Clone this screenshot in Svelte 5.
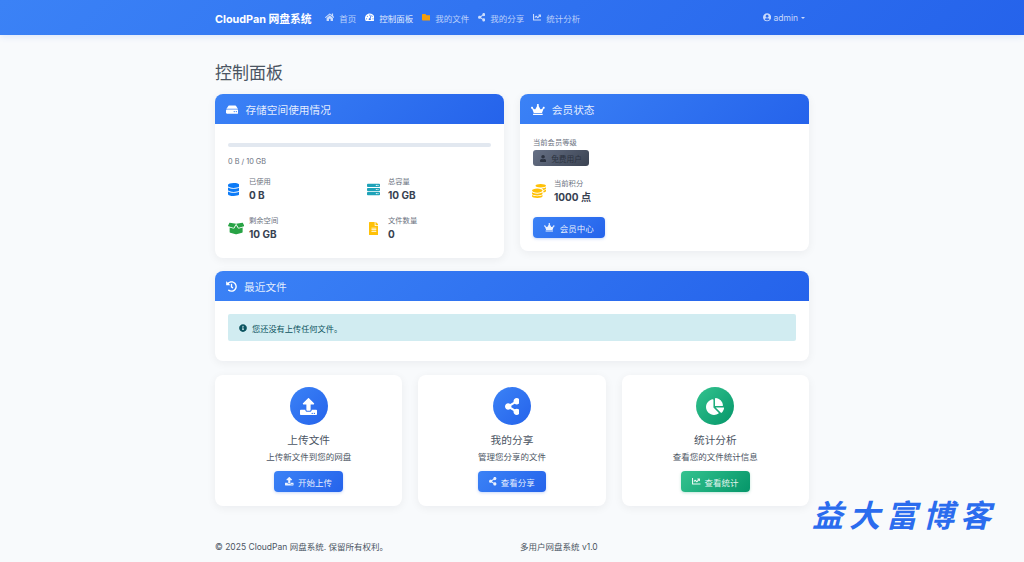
<script>
	const icons = {
		home: [576, 'M280.37 148.26L96 300.11V464a16 16 0 0 0 16 16l112.06-.29a16 16 0 0 0 15.92-16V368a16 16 0 0 1 16-16h64a16 16 0 0 1 16 16v95.64a16 16 0 0 0 16 16.05L464 480a16 16 0 0 0 16-16V300L295.67 148.26a12.19 12.19 0 0 0-15.3 0zM571.6 251.47L488 182.56V44.05a12 12 0 0 0-12-12h-56a12 12 0 0 0-12 12v72.61L318.47 43a48 48 0 0 0-61 0L4.34 251.47a12 12 0 0 0-1.6 16.9l25.5 31A12 12 0 0 0 45.15 301l235.22-193.74a12.19 12.19 0 0 1 15.3 0L530.9 301a12 12 0 0 0 16.9-1.6l25.5-31a12 12 0 0 0-1.7-16.93z'],
		gauge: [576, 'M288 32C128.94 32 0 160.94 0 320c0 52.8 14.25 102.26 39.06 144.8 5.61 9.62 16.3 15.2 27.44 15.2h443c11.14 0 21.83-5.58 27.44-15.2C561.75 422.26 576 372.8 576 320c0-159.06-128.94-288-288-288zm0 64c14.71 0 26.58 10.13 30.32 23.65-1.11 2.26-2.64 4.23-3.45 6.67l-9.22 27.67c-5.13 3.49-10.97 6.01-17.64 6.01-17.67 0-32-14.33-32-32S270.33 96 288 96zM96 384c-17.67 0-32-14.33-32-32s14.33-32 32-32 32 14.33 32 32-14.33 32-32 32zm48-160c-17.67 0-32-14.33-32-32s14.33-32 32-32 32 14.33 32 32-14.33 32-32 32zm246.77-72.41l-61.33 184C343.13 347.33 352 364.54 352 384c0 11.72-3.38 22.55-8.88 32H232.88c-5.5-9.45-8.88-20.28-8.88-32 0-33.94 26.5-61.43 59.9-63.59l61.34-184.01c4.17-12.56 17.73-19.45 30.36-15.17 12.57 4.19 19.35 17.79 15.17 30.36zm14.66 57.2l15.52-46.55c3.47-1.29 7.13-2.23 11.05-2.23 17.67 0 32 14.33 32 32s-14.33 32-32 32c-11.38-.01-20.89-6.28-26.57-15.22zM480 384c-17.67 0-32-14.33-32-32s14.33-32 32-32 32 14.33 32 32-14.33 32-32 32z'],
		folder: [512, 'M464 128H272l-64-64H48C21.49 64 0 85.49 0 112v288c0 26.51 21.49 48 48 48h416c26.51 0 48-21.49 48-48V176c0-26.51-21.49-48-48-48z'],
		share: [448, 'M352 320c-22.608 0-43.387 7.819-59.79 20.895l-102.486-64.054a96.551 96.551 0 0 0 0-41.683l102.486-64.054C308.613 184.181 329.392 192 352 192c53.019 0 96-42.981 96-96S405.019 0 352 0s-96 42.981-96 96c0 7.158.79 14.13 2.276 20.841L155.79 180.895C139.387 167.819 118.608 160 96 160c-53.019 0-96 42.981-96 96s42.981 96 96 96c22.608 0 43.387-7.819 59.79-20.895l102.486 64.054A96.301 96.301 0 0 0 256 416c0 53.019 42.981 96 96 96s96-42.981 96-96-42.981-96-96-96z'],
		chart: [512, 'M496 384H64V80c0-8.84-7.16-16-16-16H16C7.16 64 0 71.16 0 80v336c0 17.67 14.33 32 32 32h464c8.84 0 16-7.16 16-16v-32c0-8.84-7.16-16-16-16zM464 96H345.94c-21.38 0-32.09 25.85-16.97 40.97l32.4 32.4L288 242.75l-73.37-73.37c-12.5-12.5-32.76-12.5-45.25 0l-68.69 68.69c-6.25 6.25-6.25 16.38 0 22.63l22.62 22.62c6.25 6.25 16.38 6.25 22.63 0L192 237.25l73.37 73.37c12.5 12.5 32.76 12.5 45.25 0l96-96 32.4 32.4c15.12 15.12 40.97 4.41 40.97-16.97V112c0-8.84-7.16-16-16-16z'],
		userCircle: [496, 'M248 8C111 8 0 119 0 256s111 248 248 248 248-111 248-248S385 8 248 8zm0 96c48.6 0 88 39.4 88 88s-39.4 88-88 88-88-39.4-88-88 39.4-88 88-88zm0 344c-58.7 0-111.3-26.6-146.5-68.2 18.8-35.4 55.6-59.8 98.5-59.8 2.4 0 4.8.4 7.1 1.1 13 4.2 26.6 6.9 40.9 6.9 14.3 0 28-2.7 40.9-6.9 2.3-.7 4.7-1.1 7.1-1.1 42.9 0 79.7 24.4 98.5 59.8C359.3 421.4 306.7 448 248 448z'],
		hdd: [576, 'M576 304v96c0 26.51-21.49 48-48 48H48c-26.51 0-48-21.49-48-48v-96c0-26.51 21.49-48 48-48h480c26.51 0 48 21.49 48 48zm-48-80a79.557 79.557 0 0 1 30.777 6.165L462.25 85.374A48.003 48.003 0 0 0 422.311 64H153.689a48 48 0 0 0-39.938 21.374L17.223 230.165A79.557 79.557 0 0 1 48 224h480zm-48 96c-17.673 0-32 14.327-32 32s14.327 32 32 32 32-14.327 32-32-14.327-32-32-32zm-96 0c-17.673 0-32 14.327-32 32s14.327 32 32 32 32-14.327 32-32-14.327-32-32-32z'],
		crown: [640, 'M528 448H112c-8.8 0-16 7.2-16 16v32c0 8.8 7.2 16 16 16h416c8.8 0 16-7.2 16-16v-32c0-8.8-7.2-16-16-16zm64-320c-26.5 0-48 21.5-48 48 0 7.1 1.6 13.7 4.4 19.8L476 239.2c-15.4 9.2-35.3 4-44.2-11.6L350.3 85C361 76.2 368 63 368 48c0-26.5-21.5-48-48-48s-48 21.5-48 48c0 15 7 28.2 17.7 37l-81.5 142.6c-8.9 15.6-28.9 20.8-44.2 11.6l-72.3-43.4c2.7-6 4.4-12.7 4.4-19.8 0-26.5-21.5-48-48-48S0 149.5 0 176s21.5 48 48 48c2.6 0 5.2-.4 7.7-.8L128 416h384l72.3-192.8c2.5.4 5.1.8 7.7.8 26.5 0 48-21.5 48-48s-21.5-48-48-48z'],
		database: [448, 'M448 73.143v45.714C448 159.143 347.667 192 224 192S0 159.143 0 118.857V73.143C0 32.857 100.333 0 224 0s224 32.857 224 73.143zM448 176v102.857C448 319.143 347.667 352 224 352S0 319.143 0 278.857V176c48.125 33.143 136.208 48.572 224 48.572S399.874 209.143 448 176zm0 160v102.857C448 479.143 347.667 512 224 512S0 479.143 0 438.857V336c48.125 33.143 136.208 48.572 224 48.572S399.874 369.143 448 336z'],
		server: [512, 'M480 160H32c-17.673 0-32-14.327-32-32V64c0-17.673 14.327-32 32-32h448c17.673 0 32 14.327 32 32v64c0 17.673-14.327 32-32 32zm-48-88c-13.255 0-24 10.745-24 24s10.745 24 24 24 24-10.745 24-24-10.745-24-24-24zm-64 0c-13.255 0-24 10.745-24 24s10.745 24 24 24 24-10.745 24-24-10.745-24-24-24zm112 248H32c-17.673 0-32-14.327-32-32v-64c0-17.673 14.327-32 32-32h448c17.673 0 32 14.327 32 32v64c0 17.673-14.327 32-32 32zm-48-88c-13.255 0-24 10.745-24 24s10.745 24 24 24 24-10.745 24-24-10.745-24-24-24zm-64 0c-13.255 0-24 10.745-24 24s10.745 24 24 24 24-10.745 24-24-10.745-24-24-24zm112 248H32c-17.673 0-32-14.327-32-32v-64c0-17.673 14.327-32 32-32h448c17.673 0 32 14.327 32 32v64c0 17.673-14.327 32-32 32zm-48-88c-13.255 0-24 10.745-24 24s10.745 24 24 24 24-10.745 24-24-10.745-24-24-24zm-64 0c-13.255 0-24 10.745-24 24s10.745 24 24 24 24-10.745 24-24-10.745-24-24-24z'],
		box: [640, 'M425.7 256c-16.9 0-32.8-9-41.4-23.4L320 126l-64.2 106.6c-8.7 14.5-24.6 23.5-41.5 23.5-4.5 0-9-.6-13.3-1.9L64 215v178c0 14.7 10 27.5 24.2 31l216.2 54.1c10.2 2.5 20.9 2.5 31 0L551.8 424c14.2-3.6 24.2-16.4 24.2-31V215l-137 39.1c-4.3 1.3-8.8 1.9-13.3 1.9zm212.6-112.2L586.8 41c-3.1-6.2-9.8-9.8-16.7-8.9L320 64l91.7 152.1c3.8 6.3 11.4 9.3 18.5 7.3l197.9-56.5c9.9-2.9 14.7-13.9 10.2-23.1zM53.2 41L1.7 143.8c-4.6 9.2.3 20.2 10.1 23l197.9 56.5c7.1 2 14.7-1 18.5-7.3L320 64 69.8 32.1c-6.9-.8-13.5 2.8-16.6 8.9z'],
		file: [384, 'M224 136V0H24C10.7 0 0 10.7 0 24v464c0 13.3 10.7 24 24 24h336c13.3 0 24-10.7 24-24V160H248c-13.2 0-24-10.8-24-24zm64 236c0 6.6-5.4 12-12 12H108c-6.6 0-12-5.4-12-12v-8c0-6.6 5.4-12 12-12h168c6.6 0 12 5.4 12 12v8zm0-64c0 6.6-5.4 12-12 12H108c-6.6 0-12-5.4-12-12v-8c0-6.6 5.4-12 12-12h168c6.6 0 12 5.4 12 12v8zm0-72v8c0 6.6-5.4 12-12 12H108c-6.6 0-12-5.4-12-12v-8c0-6.6 5.4-12 12-12h168c6.6 0 12 5.4 12 12zm96-114.1v6.1H256V0h6.1c6.4 0 12.5 2.5 17 7l97.9 98c4.5 4.5 7 10.6 7 16.9z'],
		user: [448, 'M224 256c70.7 0 128-57.3 128-128S294.7 0 224 0 96 57.3 96 128s57.3 128 128 128zm89.6 32h-16.7c-22.2 10.2-46.9 16-72.9 16s-50.6-5.8-72.9-16h-16.7C60.2 288 0 348.2 0 422.4V464c0 26.5 21.5 48 48 48h352c26.5 0 48-21.5 48-48v-41.6c0-74.2-60.2-134.4-134.4-134.4z'],
		coins: [512, 'M0 405.3V448c0 35.3 86 64 192 64s192-28.7 192-64v-42.7C342.7 434.4 267.2 448 192 448S41.3 434.4 0 405.3zM320 128c106 0 192-28.7 192-64S426 0 320 0 128 28.7 128 64s86 64 192 64zM0 300.4V352c0 35.3 86 64 192 64s192-28.7 192-64v-51.6c-41.3 34-116.9 51.6-192 51.6S41.3 334.4 0 300.4zm416 11c57.3-11.1 96-31.7 96-55.4v-42.7c-23.2 16.4-57.3 27.6-96 34.5v63.6zM192 160C86 160 0 195.8 0 240s86 80 192 80 192-35.8 192-80-86-80-192-80zm219.3 56.3c60-10.8 100.7-32 100.7-56.3v-42.7c-35.5 25.1-96.5 38.6-160.7 41.8 29.5 14.3 51.2 33.5 60 57.2z'],
		history: [512, 'M504 255.531c.253 136.64-111.18 248.372-247.82 248.468-59.015.042-113.223-20.53-155.822-54.911-11.077-8.94-11.905-25.541-1.839-35.607l11.267-11.267c8.609-8.609 22.353-9.551 31.891-1.984C173.062 425.135 212.781 440 256 440c101.705 0 184-82.311 184-184 0-101.705-82.311-184-184-184-48.814 0-93.149 18.969-126.068 49.932l50.754 50.754c10.08 10.08 2.941 27.314-11.313 27.314H24c-8.837 0-16-7.163-16-16V38.627c0-14.254 17.234-21.393 27.314-11.314l49.372 49.372C129.209 34.136 189.552 8 256 8c136.81 0 247.747 110.78 248 247.531zm-180.912 78.784l9.823-12.63c8.138-10.463 6.253-25.542-4.21-33.679L288 256.349V152c0-13.255-10.745-24-24-24h-16c-13.255 0-24 10.745-24 24v135.651l65.409 50.874c10.463 8.137 25.541 6.253 33.679-4.21z'],
		info: [512, 'M256 8C119.043 8 8 119.083 8 256c0 136.997 111.043 248 248 248s248-111.003 248-248C504 119.083 392.957 8 256 8zm0 110c23.196 0 42 18.804 42 42s-18.804 42-42 42-42-18.804-42-42 18.804-42 42-42zm56 254c0 6.627-5.373 12-12 12h-88c-6.627 0-12-5.373-12-12v-24c0-6.627 5.373-12 12-12h12v-64h-12c-6.627 0-12-5.373-12-12v-24c0-6.627 5.373-12 12-12h64c6.627 0 12 5.373 12 12v100h12c6.627 0 12 5.373 12 12v24z'],
		upload: [512, 'M296 384h-80c-13.3 0-24-10.7-24-24V192h-87.7c-17.8 0-26.7-21.5-14.1-34.1L242.3 5.7c7.5-7.5 19.8-7.5 27.3 0l152.2 152.2c12.6 12.6 3.7 34.1-14.1 34.1H320v168c0 13.3-10.7 24-24 24zm216-8v112c0 13.3-10.7 24-24 24H24c-13.3 0-24-10.7-24-24V376c0-13.3 10.7-24 24-24h136v8c0 30.9 25.1 56 56 56h80c30.9 0 56-25.1 56-56v-8h136c13.3 0 24 10.7 24 24zm-124 88c0-11-9-20-20-20s-20 9-20 20 9 20 20 20 20-9 20-20zm64 0c0-11-9-20-20-20s-20 9-20 20 9 20 20 20 20-9 20-20z'],
		pie: [544, 'M527.79 288H290.5l158.03 158.03c6.04 6.04 15.98 6.53 22.19.68 38.7-36.46 65.32-85.61 73.13-140.86 1.34-9.46-6.51-17.85-16.06-17.85zm-15.83-64.8C503.72 103.74 408.26 8.28 288.8.04 279.68-.59 272 7.1 272 16.24V240h223.77c9.14 0 16.82-7.68 16.19-16.8zM224 288V50.71c0-9.55-8.39-17.4-17.84-16.06C86.99 51.49-4.1 155.6.14 280.37 4.5 408.51 114.83 513.59 243.03 511.98c50.4-.63 96.97-16.87 135.26-44.03 7.9-5.6 8.42-17.23 1.57-24.08L224 288z']
	};

	const navLinks = [
		{ icon: 'home', label: '首页' },
		{ icon: 'gauge', label: '控制面板', active: true },
		{ icon: 'folder', label: '我的文件', orange: true },
		{ icon: 'share', label: '我的分享' },
		{ icon: 'chart', label: '统计分析' }
	];

	const stats = [
		{ icon: 'database', color: '#0d7bf7', label: '已使用', value: '0 B' },
		{ icon: 'server', color: '#1ea2b8', label: '总容量', value: '10 GB' },
		{ icon: 'box', color: '#28a345', label: '剩余空间', value: '10 GB' },
		{ icon: 'file', color: '#ffc107', label: '文件数量', value: '0' }
	];

	const tools = [
		{ icon: 'upload', title: '上传文件', desc: '上传新文件到您的网盘', btn: '开始上传', btnIcon: 'upload' },
		{ icon: 'share', title: '我的分享', desc: '管理您分享的文件', btn: '查看分享', btnIcon: 'share' },
		{ icon: 'pie', title: '统计分析', desc: '查看您的文件统计信息', btn: '查看统计', btnIcon: 'chart', green: true }
	];
</script>

{#snippet icon(name, size)}
	<svg class="ico" viewBox="0 0 {icons[name][0]} 512" style="height: {size}px; width: {(size * icons[name][0]) / 512}px">
		<path fill="currentColor" d={icons[name][1]} />
	</svg>
{/snippet}

<nav class="navbar">
	<div class="container nav-inner">
		<span class="brand">CloudPan 网盘系统</span>
		<ul class="nav-links">
			{#each navLinks as link}
				<li class:active={link.active}>
					<span class="nav-icon" class:orange={link.orange}>{@render icon(link.icon, 8.5)}</span>
					{link.label}
				</li>
			{/each}
		</ul>
		<div class="user-menu">
			{@render icon('userCircle', 8.5)}
			<span>admin</span>
			<span class="caret"></span>
		</div>
	</div>
</nav>

<main class="container">
	<h1>控制面板</h1>

	<div class="two-col">
		<section class="card">
			<header class="card-head">
				{@render icon('hdd', 11)}
				<span class="head-title">存储空间使用情况</span>
			</header>
			<div class="card-body storage">
				<div class="progress"></div>
				<p class="usage">0 B / 10 GB</p>
				<div class="stats">
					{#each stats as s}
						<div class="stat">
							<span class="stat-icon" style="color: {s.color}">{@render icon(s.icon, 13)}</span>
							<div>
								<div class="stat-label">{s.label}</div>
								<div class="stat-value">{s.value}</div>
							</div>
						</div>
					{/each}
				</div>
			</div>
		</section>

		<section class="card">
			<header class="card-head">
				{@render icon('crown', 11)}
				<span class="head-title">会员状态</span>
			</header>
			<div class="card-body member">
				<div class="stat-label">当前会员等级</div>
				<div class="badge">{@render icon('user', 7)}<span>免费用户</span></div>
				<div class="stat points">
					<span class="stat-icon coin">{@render icon('coins', 14)}</span>
					<div>
						<div class="stat-label">当前积分</div>
						<div class="stat-value">1000 点</div>
					</div>
				</div>
				<div class="btn vip">{@render icon('crown', 8.5)}<span>会员中心</span></div>
			</div>
		</section>
	</div>

	<section class="card recent">
		<header class="card-head">
			{@render icon('history', 11)}
			<span class="head-title">最近文件</span>
		</header>
		<div class="card-body">
			<div class="alert">
				{@render icon('info', 8)}
				<span>您还没有上传任何文件。</span>
			</div>
		</div>
	</section>

	<div class="tools">
		{#each tools as t}
			<section class="card tool">
				<div class="circle" class:green={t.green}>{@render icon(t.icon, 17)}</div>
				<h3>{t.title}</h3>
				<p>{t.desc}</p>
				<div class="btn" class:green={t.green}>{@render icon(t.btnIcon, 8.5)}<span>{t.btn}</span></div>
			</section>
		{/each}
	</div>

	<footer>
		<span>© 2025 CloudPan 网盘系统. 保留所有权利。</span>
		<span>多用户网盘系统 v1.0</span>
	</footer>
</main>

<div class="watermark">益大富博客</div>

<style>
	:global(body) {
		margin: 0;
		background: #f8fafc;
		font-family: Inter, 'Noto Sans CJK SC', sans-serif;
		color: #374151;
	}

	.container {
		width: 594px;
		margin: 0 auto;
	}

	.ico {
		display: block;
		flex: none;
	}

	.navbar {
		height: 35px;
		background: linear-gradient(135deg, #3b82f6, #2563eb);
		box-shadow: 0 2px 6px rgba(37, 99, 235, 0.12);
	}

	.nav-inner {
		display: flex;
		align-items: center;
		height: 100%;
	}

	.brand {
		color: #fff;
		font-size: 10.8px;
		font-weight: 700;
		margin-right: 13px;
	}

	.nav-links {
		display: flex;
		gap: 8.5px;
		list-style: none;
		margin: 0;
		padding: 0;
		flex: 1;
	}

	.nav-links li {
		display: flex;
		align-items: center;
		gap: 5px;
		font-size: 8.5px;
		color: rgba(255, 255, 255, 0.68);
	}

	.nav-links li.active {
		color: rgba(255, 255, 255, 0.88);
	}

	.nav-icon {
		color: rgba(255, 255, 255, 0.75);
	}

	.nav-links li.active .nav-icon {
		color: #fff;
	}

	.nav-icon.orange {
		color: #f59e0b;
	}

	.user-menu {
		display: flex;
		align-items: center;
		gap: 2px;
		margin-right: 4px;
		font-size: 8.5px;
		color: rgba(255, 255, 255, 0.75);
	}

	.caret {
		border: 2px solid transparent;
		border-top-color: currentColor;
		border-bottom: 0;
		margin-left: 1px;
	}

	h1 {
		margin: 0;
		padding: 28px 0 11px;
		font-size: 17px;
		line-height: 20px;
		font-weight: 400;
		color: #4b5563;
	}

	.two-col {
		display: grid;
		grid-template-columns: 1fr 1fr;
		gap: 16px;
		align-items: start;
	}

	.card {
		background: #fff;
		border-radius: 8px;
		box-shadow: 0 2px 10px rgba(15, 23, 42, 0.06);
		overflow: hidden;
	}

	.card-head {
		display: flex;
		align-items: center;
		height: 30px;
		padding: 0 11px;
		color: #fff;
		background: linear-gradient(135deg, #3b82f6, #2563eb);
	}

	.head-title {
		font-size: 10.7px;
		margin-left: 7px;
		color: rgba(255, 255, 255, 0.88);
	}

	.card-body {
		padding: 13px;
	}

	.storage {
		padding-bottom: 17px;
	}

	.progress {
		height: 4px;
		margin-top: 6px;
		background: #e2e8f0;
		border-radius: 3px;
	}

	.usage {
		margin: 9px 0 0;
		font-size: 7.3px;
		line-height: 12px;
		color: #6b7280;
	}

	.stats {
		display: grid;
		grid-template-columns: 131px 1fr;
		column-gap: 8px;
		row-gap: 13px;
		margin-top: 8px;
	}

	.stat {
		display: flex;
		align-items: center;
	}

	.stat-icon {
		display: flex;
		justify-content: flex-start;
		width: 13px;
		margin-right: 8px;
	}

	.stat:nth-child(even) .stat-icon {
		justify-content: center;
	}

	.stat-label {
		font-size: 7.3px;
		line-height: 12px;
		color: #6b7280;
	}

	.stat-value {
		font-size: 10px;
		line-height: 14px;
		font-weight: 700;
		color: #374151;
	}

	.member {
		padding-top: 12.5px;
		padding-bottom: 13px;
	}

	.badge {
		display: flex;
		width: fit-content;
		align-items: center;
		gap: 5px;
		height: 16px;
		padding: 0 7px;
		margin-top: 1.5px;
		border-radius: 3px;
		font-size: 7.7px;
		color: #2b3240;
		background: linear-gradient(135deg, #667085, #3b4352);
	}

	.points {
		margin-top: 12px;
	}

	.stat-icon.coin {
		color: #ffc107;
		width: 14px;
		margin-right: 8px;
		margin-left: -1px;
	}

	.btn {
		display: inline-flex;
		align-items: center;
		justify-content: center;
		gap: 4px;
		height: 21px;
		padding: 0 11px;
		border-radius: 4px;
		font-size: 8.5px;
		color: rgba(255, 255, 255, 0.9);
		background: linear-gradient(135deg, #3b82f6, #2563eb);
		box-shadow: 0 1px 3px rgba(37, 99, 235, 0.25);
	}

	.btn.vip {
		display: flex;
		width: fit-content;
		margin-top: 13px;
		gap: 5px;
	}

	.btn.green {
		background: linear-gradient(135deg, #34c38f, #059669);
		box-shadow: 0 1px 3px rgba(5, 150, 105, 0.25);
	}

	.recent {
		margin-top: 13px;
	}

	.recent .card-body {
		padding-bottom: 20px;
	}

	.alert {
		display: flex;
		align-items: center;
		gap: 5px;
		height: 27px;
		padding: 0 11px;
		border-radius: 2px;
		font-size: 8.2px;
		color: #0c5460;
		background: #d1ecf1;
	}

	.tools {
		display: grid;
		grid-template-columns: repeat(3, 1fr);
		gap: 16px;
		margin-top: 14px;
	}

	.tool {
		display: flex;
		flex-direction: column;
		align-items: center;
		padding: 12px 0 14px;
	}

	.circle {
		display: flex;
		align-items: center;
		justify-content: center;
		width: 38px;
		height: 38px;
		border-radius: 50%;
		color: #fff;
		background: linear-gradient(135deg, #3b82f6, #2563eb);
	}

	.circle.green {
		background: linear-gradient(135deg, #34c38f, #059669);
	}

	.tool h3 {
		margin: 9px 0 0;
		font-size: 10.7px;
		line-height: 14px;
		font-weight: 400;
		color: #4b5563;
	}

	.tool p {
		margin: 3px 0 8px;
		font-size: 8.5px;
		line-height: 12px;
		color: #4b5563;
	}

	footer {
		display: grid;
		grid-template-columns: 1fr 1fr;
		gap: 16px;
		margin-top: 35px;
		font-size: 8.5px;
		line-height: 12px;
		color: #4b5563;
	}

	.watermark {
		position: absolute;
		left: 812px;
		top: 493px;
		font-family: 'Noto Sans CJK SC', sans-serif;
		font-size: 31px;
		line-height: 42px;
		font-weight: 700;
		font-style: italic;
		letter-spacing: 6px;
		color: #2b6cee;
		white-space: nowrap;
	}
</style>
